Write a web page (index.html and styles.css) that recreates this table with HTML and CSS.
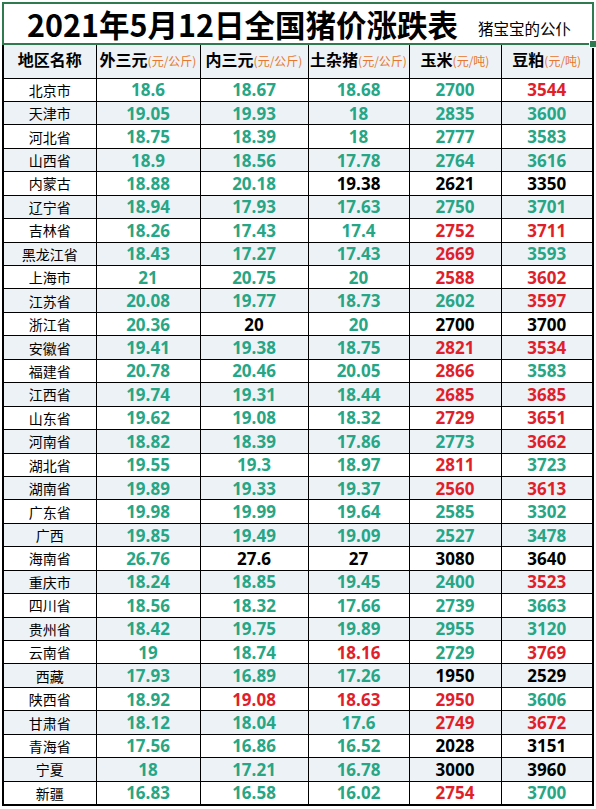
FILE: index.html
```html
<!DOCTYPE html>
<html lang="zh-CN">
<head>
<meta charset="utf-8">
<title>2021年5月12日全国猪价涨跌表</title>
<link rel="stylesheet" href="styles.css">
</head>
<body>
<div class="sheet">
  <div class="title">
    <h1>2021年5月12日全国猪价涨跌表</h1>
    <span class="author">猪宝宝的公仆</span>
    <span class="handle"></span>
  </div>
  <table class="prices">
    <colgroup>
      <col class="c1"><col class="c2"><col class="c3"><col class="c4"><col class="c5"><col class="c6">
    </colgroup>
    <thead>
      <tr>
        <th>地区名称</th>
        <th>外三元<small>(元/公斤)</small></th>
        <th>内三元<small>(元/公斤)</small></th>
        <th>土杂猪<small>(元/公斤)</small></th>
        <th>玉米<small>(元/吨)</small></th>
        <th>豆粕<small>(元/吨)</small></th>
      </tr>
    </thead>
    <tbody>
      <tr><td>北京市</td><td class="g">18.6</td><td class="g">18.67</td><td class="g">18.68</td><td class="g">2700</td><td class="r">3544</td></tr>
      <tr class="alt"><td>天津市</td><td class="g">19.05</td><td class="g">19.93</td><td class="g">18</td><td class="g">2835</td><td class="g">3600</td></tr>
      <tr><td>河北省</td><td class="g">18.75</td><td class="g">18.39</td><td class="g">18</td><td class="g">2777</td><td class="g">3583</td></tr>
      <tr class="alt"><td>山西省</td><td class="g">18.9</td><td class="g">18.56</td><td class="g">17.78</td><td class="g">2764</td><td class="g">3616</td></tr>
      <tr><td>内蒙古</td><td class="g">18.88</td><td class="g">20.18</td><td class="k">19.38</td><td class="k">2621</td><td class="k">3350</td></tr>
      <tr class="alt"><td>辽宁省</td><td class="g">18.94</td><td class="g">17.93</td><td class="g">17.63</td><td class="g">2750</td><td class="g">3701</td></tr>
      <tr><td>吉林省</td><td class="g">18.26</td><td class="g">17.43</td><td class="g">17.4</td><td class="r">2752</td><td class="r">3711</td></tr>
      <tr class="alt"><td>黑龙江省</td><td class="g">18.43</td><td class="g">17.27</td><td class="g">17.43</td><td class="r">2669</td><td class="g">3593</td></tr>
      <tr><td>上海市</td><td class="g">21</td><td class="g">20.75</td><td class="g">20</td><td class="r">2588</td><td class="r">3602</td></tr>
      <tr class="alt"><td>江苏省</td><td class="g">20.08</td><td class="g">19.77</td><td class="g">18.73</td><td class="g">2602</td><td class="r">3597</td></tr>
      <tr><td>浙江省</td><td class="g">20.36</td><td class="k">20</td><td class="g">20</td><td class="k">2700</td><td class="k">3700</td></tr>
      <tr class="alt"><td>安徽省</td><td class="g">19.41</td><td class="g">19.38</td><td class="g">18.75</td><td class="r">2821</td><td class="r">3534</td></tr>
      <tr><td>福建省</td><td class="g">20.78</td><td class="g">20.46</td><td class="g">20.05</td><td class="r">2866</td><td class="g">3583</td></tr>
      <tr class="alt"><td>江西省</td><td class="g">19.74</td><td class="g">19.31</td><td class="g">18.44</td><td class="r">2685</td><td class="r">3685</td></tr>
      <tr><td>山东省</td><td class="g">19.62</td><td class="g">19.08</td><td class="g">18.32</td><td class="r">2729</td><td class="r">3651</td></tr>
      <tr class="alt"><td>河南省</td><td class="g">18.82</td><td class="g">18.39</td><td class="g">17.86</td><td class="g">2773</td><td class="r">3662</td></tr>
      <tr><td>湖北省</td><td class="g">19.55</td><td class="g">19.3</td><td class="g">18.97</td><td class="r">2811</td><td class="g">3723</td></tr>
      <tr class="alt"><td>湖南省</td><td class="g">19.89</td><td class="g">19.33</td><td class="g">19.37</td><td class="r">2560</td><td class="r">3613</td></tr>
      <tr><td>广东省</td><td class="g">19.98</td><td class="g">19.99</td><td class="g">19.64</td><td class="g">2585</td><td class="g">3302</td></tr>
      <tr class="alt"><td>广西</td><td class="g">19.85</td><td class="g">19.49</td><td class="g">19.09</td><td class="g">2527</td><td class="g">3478</td></tr>
      <tr><td>海南省</td><td class="g">26.76</td><td class="k">27.6</td><td class="k">27</td><td class="k">3080</td><td class="k">3640</td></tr>
      <tr class="alt"><td>重庆市</td><td class="g">18.24</td><td class="g">18.85</td><td class="g">19.45</td><td class="g">2400</td><td class="r">3523</td></tr>
      <tr><td>四川省</td><td class="g">18.56</td><td class="g">18.32</td><td class="g">17.66</td><td class="g">2739</td><td class="g">3663</td></tr>
      <tr class="alt"><td>贵州省</td><td class="g">18.42</td><td class="g">19.75</td><td class="g">19.89</td><td class="g">2955</td><td class="g">3120</td></tr>
      <tr><td>云南省</td><td class="g">19</td><td class="g">18.74</td><td class="r">18.16</td><td class="g">2729</td><td class="r">3769</td></tr>
      <tr class="alt"><td>西藏</td><td class="g">17.93</td><td class="g">16.89</td><td class="g">17.26</td><td class="k">1950</td><td class="k">2529</td></tr>
      <tr><td>陕西省</td><td class="g">18.92</td><td class="r">19.08</td><td class="r">18.63</td><td class="r">2950</td><td class="g">3606</td></tr>
      <tr class="alt"><td>甘肃省</td><td class="g">18.12</td><td class="g">18.04</td><td class="g">17.6</td><td class="r">2749</td><td class="r">3672</td></tr>
      <tr><td>青海省</td><td class="g">17.56</td><td class="g">16.86</td><td class="g">16.52</td><td class="k">2028</td><td class="k">3151</td></tr>
      <tr class="alt"><td>宁夏</td><td class="g">18</td><td class="g">17.21</td><td class="g">16.78</td><td class="k">3000</td><td class="k">3960</td></tr>
      <tr><td>新疆</td><td class="g">16.83</td><td class="g">16.58</td><td class="g">16.02</td><td class="r">2754</td><td class="g">3700</td></tr>
    </tbody>
  </table>
</div>
</body>
</html>
```

FILE: styles.css
```css
html, body {
  margin: 0;
  padding: 0;
  background: #ffffff;
}

body {
  font-family: "Noto Sans CJK SC", "Noto Sans", sans-serif;
  color: #000;
}

.sheet {
  width: 592px;
  margin: 0 0 0 2px;
  padding-top: 2px;
}

.title {
  position: relative;
  box-sizing: border-box;
  height: 43px;
  border: 2px solid #2f7a50;
  display: flex;
  align-items: center;
  padding-left: 23px;
  background: #fff;
}

.title h1 {
  margin: 0;
  font-size: 30.5px;
  font-weight: 700;
  line-height: 1;
  letter-spacing: 0;
  padding-top: 2px;
}

.author {
  font-size: 15.5px;
  line-height: 1;
  margin-left: 20px;
  padding-top: 10px;
}

.handle {
  position: absolute;
  right: -5px;
  bottom: -5px;
  width: 6px;
  height: 6px;
  background: #2f7a50;
  border: 1px solid #fff;
}

.prices {
  width: 592px;
  table-layout: fixed;
  border-collapse: collapse;
  border-left: 2px solid #000;
  border-right: 2px solid #000;
  border-bottom: 2px solid #000;
}

.c1 { width: 93px; }
.c2 { width: 104px; }
.c3 { width: 108px; }
.c4 { width: 101px; }
.c5 { width: 92px; }
.c6 { width: 92px; }

.prices th,
.prices td {
  border: 1px solid #000;
  padding: 0;
  text-align: center;
  white-space: nowrap;
  overflow: hidden;
}

.prices thead tr {
  height: 33px;
}

.prices th {
  border-top: none;
  background: #edf2f7;
  font-size: 16px;
  font-weight: 700;
  line-height: 1;
  padding-bottom: 4px;
}

.prices th small {
  font-size: 12px;
  font-weight: 400;
  color: #e8762c;
}

.prices tbody tr {
  height: 23.45px;
}

.prices tbody tr.alt {
  background: #edf2f7;
}

.prices td {
  font-size: 14px;
  line-height: 1;
}

.prices td.g,
.prices td.r,
.prices td.k {
  font-family: "Open Sans", "Noto Sans", sans-serif;
  font-size: 17px;
  font-weight: 700;
}

.g { color: #27a685; }
.r { color: #e11f2b; }
.k { color: #000; }
```
